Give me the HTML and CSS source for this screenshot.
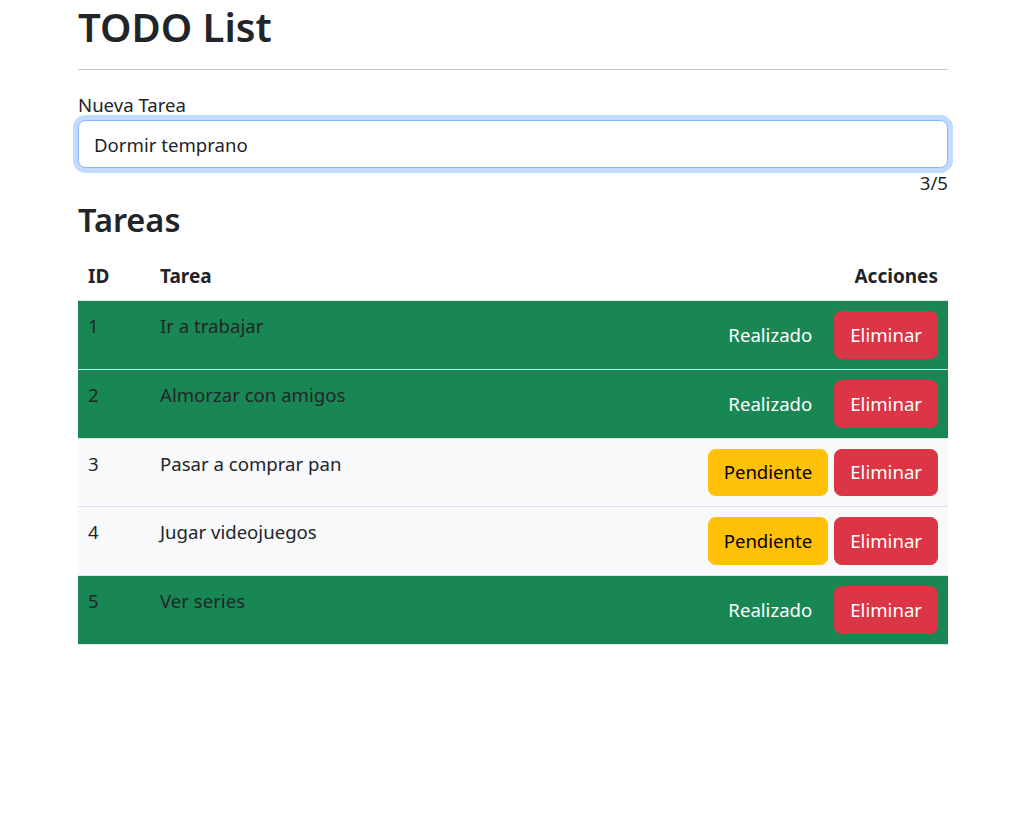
FILE: index.html
```html
<!DOCTYPE html>
<html lang="es">
<head>
<meta charset="utf-8">
<title>TODO List</title>
<link rel="stylesheet" href="styles.css">
</head>
<body>
<div class="container">
  <h1 class="title">TODO List</h1>
  <hr class="divider">
  <label class="label" for="nueva">Nueva Tarea</label>
  <input id="nueva" class="input" type="text" value="Dormir temprano">
  <div class="counter">3/5</div>
  <h2 class="subtitle">Tareas</h2>
  <table class="table">
    <thead>
      <tr>
        <th class="col-id">ID</th>
        <th>Tarea</th>
        <th class="col-actions">Acciones</th>
      </tr>
    </thead>
    <tbody>
      <tr class="done">
        <td>1</td><td>Ir a trabajar</td>
        <td><div class="actions"><button class="btn btn-success">Realizado</button><button class="btn btn-danger">Eliminar</button></div></td>
      </tr>
      <tr class="done">
        <td>2</td><td>Almorzar con amigos</td>
        <td><div class="actions"><button class="btn btn-success">Realizado</button><button class="btn btn-danger">Eliminar</button></div></td>
      </tr>
      <tr class="pending">
        <td>3</td><td>Pasar a comprar pan</td>
        <td><div class="actions"><button class="btn btn-warning">Pendiente</button><button class="btn btn-danger">Eliminar</button></div></td>
      </tr>
      <tr class="pending">
        <td>4</td><td>Jugar videojuegos</td>
        <td><div class="actions"><button class="btn btn-warning">Pendiente</button><button class="btn btn-danger">Eliminar</button></div></td>
      </tr>
      <tr class="done">
        <td>5</td><td>Ver series</td>
        <td><div class="actions"><button class="btn btn-success">Realizado</button><button class="btn btn-danger">Eliminar</button></div></td>
      </tr>
    </tbody>
  </table>
</div>
</body>
</html>
```

FILE: styles.css
```css
* { box-sizing: border-box; }

body {
  margin: 0;
  font-family: "Noto Sans", "Open Sans", sans-serif;
  font-size: 18.6px;
  line-height: 30px;
  color: #212529;
  background: #fff;
}

.container {
  width: 870px;
  margin-left: 78px;
  padding-top: 1px;
}

.title {
  margin: 0 0 17px;
  font-size: 40px;
  line-height: 51px;
  font-weight: 600;
}

.divider {
  margin: 0 0 20px;
  border: 0;
  border-top: 1px solid #c8c9ca;
  height: 0;
}

.label {
  display: block;
  height: 30px;
}

.input {
  display: block;
  width: 100%;
  height: 48px;
  margin: 0;
  padding: 0 15px;
  font: inherit;
  color: #212529;
  border: 1px solid #86b7fe;
  border-radius: 7.5px;
  box-shadow: 0 0 0 5px rgba(13, 110, 253, 0.25);
  outline: none;
  background: #fff;
}

.counter {
  text-align: right;
}

.subtitle {
  margin: 0 0 10px;
  font-size: 32.5px;
  line-height: 43px;
  font-weight: 600;
}

.table {
  width: 100%;
  border-collapse: collapse;
}

.table th,
.table td {
  padding: 10px;
  text-align: left;
  vertical-align: top;
  border-bottom: 1px solid #dee2e6;
}

.table th {
  font-weight: 700;
  font-size: 19px;
  vertical-align: bottom;
  padding-bottom: 9px;
}

.col-id { width: 72px; }

.table .col-actions { text-align: right; }

.done td { background: #198754; }
.pending td { background: #f8f9fa; }

.actions {
  display: flex;
  justify-content: flex-end;
  gap: 6px;
}

.btn {
  height: 47.75px;
  padding: 0 15px;
  font: inherit;
  border: 1px solid transparent;
  border-radius: 7.5px;
  cursor: pointer;
}

.btn-success { background: #198754; border-color: #198754; color: #fff; }
.btn-danger { background: #dc3545; border-color: #dc3545; color: #fff; }
.btn-warning { background: #ffc107; border-color: #ffc107; color: #000; }
```
